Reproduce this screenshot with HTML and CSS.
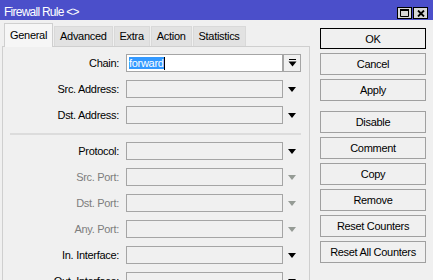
FILE: index.html
```html
<!DOCTYPE html>
<html lang="en">
<head>
  <meta charset="UTF-8">
  <title>Firewall Rule</title>
  <link rel="stylesheet" href="styles.css">
</head>
<body>
  <div class="window">
    <div class="titlebar">
      <span class="title">Firewall Rule &lt;&gt;</span>
      <div class="win-btns">
        <span class="win-btn">
          <svg width="9" height="8" viewBox="0 0 9 8"><path d="M0.5 0.5h8v7h-8z M0 1.5h9" fill="none" stroke="#000" stroke-width="1"/><rect x="0" y="0" width="9" height="2" fill="#000"/></svg>
        </span>
        <span class="win-btn">
          <svg width="8" height="7" viewBox="0 0 8 7"><path d="M1 0.5l6 6M7 0.5l-6 6" stroke="#000" stroke-width="1.8"/></svg>
        </span>
      </div>
    </div>

    <div class="content">
      <div class="left">
        <div class="tabs">
          <span class="tab active">General</span>
          <span class="tab">Advanced</span>
          <span class="tab">Extra</span>
          <span class="tab">Action</span>
          <span class="tab">Statistics</span>
        </div>

        <div class="panel">
          <div class="fields">
            <div class="row">
              <label class="label">Chain:</label>
              <div class="input white"><span class="selected">forward</span><span class="caret"></span></div>
              <span class="drop-btn">
                <svg width="9" height="8" viewBox="0 0 9 8"><rect x="1" y="0" width="7" height="1" fill="#000"/><path d="M0.5 2.5h8l-4 5z" fill="#000"/></svg>
              </span>
            </div>
            <div class="row">
              <label class="label">Src. Address:</label>
              <div class="input"></div>
              <span class="arrow"></span>
            </div>
            <div class="row">
              <label class="label">Dst. Address:</label>
              <div class="input"></div>
              <span class="arrow"></span>
            </div>
          </div>

          <div class="sep"></div>

          <div class="fields">
            <div class="row">
              <label class="label">Protocol:</label>
              <div class="input"></div>
              <span class="arrow"></span>
            </div>
            <div class="row off">
              <label class="label">Src. Port:</label>
              <div class="input"></div>
              <span class="arrow"></span>
            </div>
            <div class="row off">
              <label class="label">Dst. Port:</label>
              <div class="input"></div>
              <span class="arrow"></span>
            </div>
            <div class="row off">
              <label class="label">Any. Port:</label>
              <div class="input"></div>
              <span class="arrow"></span>
            </div>
            <div class="row">
              <label class="label">In. Interface:</label>
              <div class="input"></div>
              <span class="arrow"></span>
            </div>
            <div class="row">
              <label class="label">Out. Interface:</label>
              <div class="input"></div>
              <span class="arrow"></span>
            </div>
          </div>
        </div>
      </div>

      <div class="actions">
        <button class="btn default">OK</button>
        <button class="btn">Cancel</button>
        <button class="btn">Apply</button>
        <button class="btn spaced">Disable</button>
        <button class="btn">Comment</button>
        <button class="btn">Copy</button>
        <button class="btn">Remove</button>
        <button class="btn">Reset Counters</button>
        <button class="btn">Reset All Counters</button>
      </div>
    </div>
  </div>
</body>
</html>
```

FILE: styles.css
```css
* {
  margin: 0;
  padding: 0;
  box-sizing: border-box;
  font-family: 'Liberation Sans', Arial, sans-serif;
}

body {
  background: #f0f0f0;
}

.window {
  width: 433px;
  height: 280px;
  overflow: hidden;
  background: #f0f0f0;
  font-size: 11px;
  letter-spacing: -0.3px;
  color: #000;
}

/* title bar */
.titlebar {
  display: flex;
  justify-content: space-between;
  align-items: flex-end;
  height: 20px;
  padding: 0 5px 1px 4px;
  background: #4b4fca;
}

.title {
  color: #fff;
  font-size: 12px;
  letter-spacing: -0.75px;
  line-height: 14px;
  margin-bottom: 0;
}

.win-btns {
  display: flex;
  gap: 1px;
}

.win-btn {
  display: flex;
  justify-content: center;
  align-items: center;
  width: 15px;
  height: 12px;
  background: #d8d8d8;
  border: 1px solid #000;
}

/* main area */
.content {
  display: flex;
  height: 260px;
}

.left {
  width: 310px;
}

.tabs {
  display: flex;
  align-items: flex-end;
  gap: 1px;
  height: 26px;
  padding-left: 4px;
}

.tab {
  height: 20px;
  line-height: 19px;
  padding: 0 5px;
  background: #e2e2e2;
  border: 1px solid #d9d9d9;
  border-bottom: none;
}

.tab.active {
  position: relative;
  z-index: 1;
  height: 24px;
  line-height: 22px;
  margin-bottom: -1px;
  background: #f6f6f6;
  border-color: #cfcfcf;
}

.panel {
  width: 308px;
  height: 234px;
  margin-left: 2px;
  padding: 7px 0 0 0;
  border: 1px solid #cfcfcf;
  border-bottom: none;
}

.fields {
  display: flex;
  flex-direction: column;
  gap: 8px;
}

.row {
  display: flex;
  align-items: center;
  height: 18px;
}

.label {
  width: 116px;
  margin-right: 7px;
  text-align: right;
}

.input {
  width: 157px;
  height: 18px;
  padding: 2px;
  border: 1px solid #a5a5a5;
}

.input.white {
  display: flex;
  align-items: center;
  background: #fff;
}

.selected {
  background: #3399ff;
  color: #fff;
  line-height: 12px;
}

.caret {
  width: 1px;
  height: 13px;
  background: #000;
}

.drop-btn {
  display: flex;
  justify-content: center;
  align-items: center;
  width: 18px;
  height: 18px;
  border: 1px solid #a5a5a5;
}

.arrow {
  width: 0;
  height: 0;
  margin-left: 5px;
  border-left: 4.5px solid transparent;
  border-right: 4.5px solid transparent;
  border-top: 5px solid #000;
}

.row.off .label {
  color: #7d7d7d;
}

.row.off .arrow {
  border-top-color: #959b95;
}

.sep {
  height: 2px;
  margin: 9px 8px 7px 7px;
  background: #dcdcdc;
}

/* buttons on the right */
.actions {
  display: flex;
  flex-direction: column;
  gap: 4px;
  width: 106px;
  margin-left: 10px;
  padding-top: 8px;
}

.btn {
  height: 22px;
  background: #f0f0f0;
  border: 1px solid #a0a0a0;
  font-size: 11px;
  letter-spacing: -0.3px;
  color: #000;
}

.btn.default {
  height: 21px;
  border-color: #000;
}

.btn.spaced {
  margin-top: 6px;
}
```
